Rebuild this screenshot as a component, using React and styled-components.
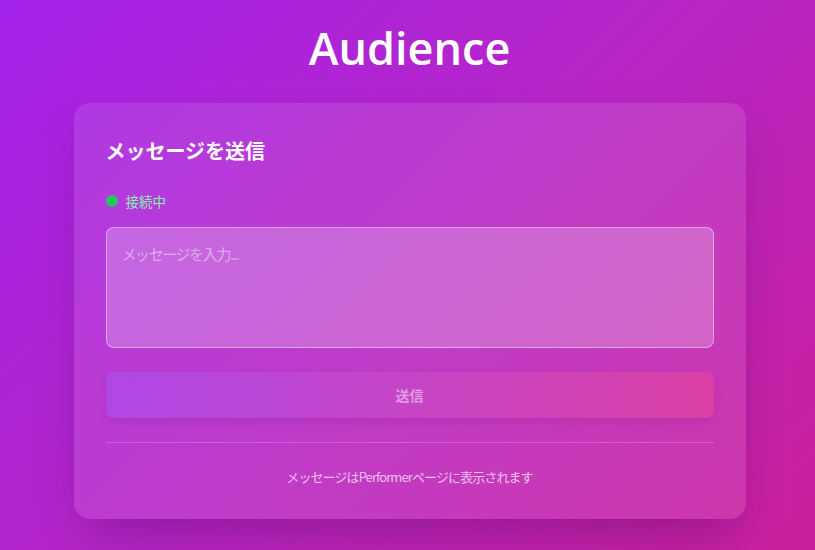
import React, { useState } from 'react';
import styled, { createGlobalStyle } from 'styled-components';

const GlobalStyle = createGlobalStyle`
  * { box-sizing: border-box; }
  html, body { margin: 0; padding: 0; }
  body {
    font-family: "Noto Sans CJK JP", "Open Sans", sans-serif;
    background: linear-gradient(135deg, #a322ea 0%, #b726c6 50%, #cb209c 100%);
    min-height: 100vh;
  }
`;

const Page = styled.div`
  min-height: 550px;
  padding: 24px 14px 30px 18px;
  display: flex;
  flex-direction: column;
  align-items: center;
`;

const Title = styled.h1`
  margin: 0 0 31px;
  font-family: "Open Sans", "Noto Sans", sans-serif;
  font-weight: 600;
  font-size: 45px;
  line-height: 48px;
  color: #ffffff;
`;

const Card = styled.div`
  width: 672px;
  padding: 32px;
  border-radius: 16px;
  background: rgba(255, 255, 255, 0.1);
  box-shadow: 0 25px 50px -12px rgba(60, 0, 80, 0.35);
`;

const CardTitle = styled.h2`
  margin: 0 0 24px;
  font-size: 20px;
  line-height: 32px;
  font-weight: 700;
  color: #ffffff;
`;

const Status = styled.div`
  display: flex;
  align-items: center;
  gap: 8px;
  height: 20px;
  margin-bottom: 16px;
  font-size: 13.5px;
  color: ${(p) => (p.$online ? '#86efac' : '#fca5a5')};
`;

const Dot = styled.span`
  width: 12px;
  height: 12px;
  border-radius: 50%;
  background: ${(p) => (p.$online ? '#22c55e' : '#ef4444')};
`;

const TextArea = styled.textarea`
  display: block;
  width: 100%;
  height: 121px;
  resize: none;
  padding: 14px 15px;
  border-radius: 8px;
  border: 1px solid rgba(255, 255, 255, 0.4);
  background: rgba(255, 255, 255, 0.22);
  font-family: "Noto Sans CJK JP", sans-serif;
  font-size: 15px;
  line-height: 24px;
  letter-spacing: -1.4px;
  color: #ffffff;
  outline: none;

  &::placeholder {
    color: rgba(255, 255, 255, 0.45);
  }
`;

const SendButton = styled.button`
  display: block;
  width: 100%;
  height: 46px;
  margin-top: 24px;
  border: none;
  border-radius: 8px;
  background: linear-gradient(90deg, #a855f7, #ec4899);
  opacity: 0.5;
  box-shadow: 0 6px 12px -4px rgba(80, 0, 90, 0.35);
  font-family: "Noto Sans CJK JP", sans-serif;
  font-weight: 700;
  font-size: 14px;
  color: #ffffff;
  cursor: not-allowed;
`;

const Footer = styled.div`
  margin-top: 24px;
  padding-top: 24px;
  border-top: 1px solid rgba(255, 255, 255, 0.2);
  text-align: center;
  font-size: 13px;
  line-height: 20px;
  letter-spacing: -0.9px;
  color: rgba(255, 255, 255, 0.7);
`;

export default function App() {
  const [text, setText] = useState('');
  const online = true;

  return (
    <Page>
      <GlobalStyle />
      <Title>Audience</Title>
      <Card>
        <CardTitle>メッセージを送信</CardTitle>
        <Status $online={online}>
          <Dot $online={online} />
          接続中
        </Status>
        <TextArea
          placeholder="メッセージを入力..."
          value={text}
          onChange={(e) => setText(e.target.value)}
        />
        <SendButton disabled={!text.trim()}>送信</SendButton>
        <Footer>メッセージはPerformerページに表示されます</Footer>
      </Card>
    </Page>
  );
}
